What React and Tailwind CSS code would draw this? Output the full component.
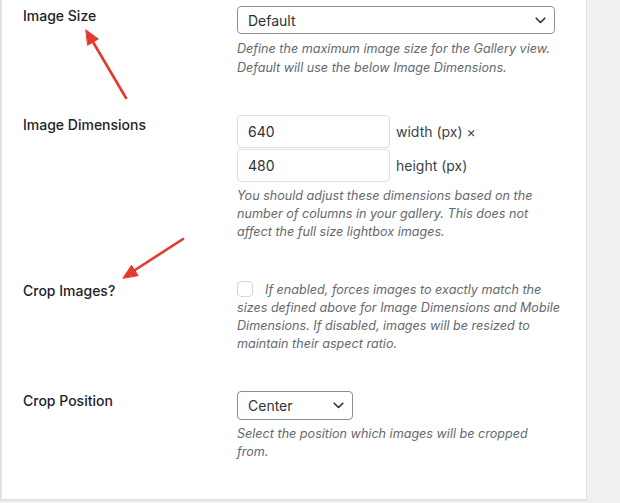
import React from 'react';

const Chevron = () => (
  <svg width="11" height="7" viewBox="0 0 11 7" fill="none" className="shrink-0">
    <path d="M1.2 1.2 L5.5 5.5 L9.8 1.2" stroke="#2c3338" strokeWidth="1.6" strokeLinecap="round" strokeLinejoin="round" />
  </svg>
);

const Select = ({ value, className }) => (
  <div className={`flex items-center justify-between border border-[#8c8f94] rounded-[4px] bg-white pl-[10px] pr-[8px] text-[14px] text-[#2c3338] ${className}`}>
    <span>{value}</span>
    <Chevron />
  </div>
);

const Row = ({ label, children, className = '' }) => (
  <div className={`flex ${className}`}>
    <div className="w-[235px] shrink-0 pl-[21px] text-[14px] leading-5 font-medium text-[#1d2327]">{label}</div>
    <div className="w-[330px]">{children}</div>
  </div>
);

// lines kept as in the reference wrapping
const Desc = ({ lines, className = '', lead = null }) => (
  <p className={`text-[12.6px] leading-[18px] italic text-[#646970] whitespace-nowrap ${className}`}>
    {lead}
    {lines.map((l, i) => (
      <React.Fragment key={i}>
        {i > 0 && <br />}
        {l}
      </React.Fragment>
    ))}
  </p>
);

export default function App() {
  return (
    <div className="relative w-[620px] h-[503px] overflow-hidden bg-[#f0f0f1]" style={{ fontFamily: 'Inter, "Noto Sans", sans-serif' }}>
      <div className="w-[587px] h-[501px] bg-white border-l-2 border-r border-b-2 border-[#e2e2e4] pt-[6px]">
        <Row label="Image Size">
          <Select value="Default" className="w-[318px] h-[28px]" />
          <Desc
            className="mt-[5px] leading-[19px]"
            lines={['Define the maximum image size for the Gallery view.', 'Default will use the below Image Dimensions.']}
          />
        </Row>

        <Row label="Image Dimensions" className="mt-[38px]">
          <div className="flex flex-col gap-px">
            <div className="flex items-center gap-[6px]">
              <div className="w-[153px] h-[33px] border border-[#e0e0e2] rounded-[4px] pl-[10px] flex items-center text-[14px] text-[#2c3338]">640</div>
              <span className="text-[14px] text-[#3c434a]">width (px) ×</span>
            </div>
            <div className="flex items-center gap-[6px]">
              <div className="w-[153px] h-[33px] border border-[#e0e0e2] rounded-[4px] pl-[10px] flex items-center text-[14px] text-[#2c3338]">480</div>
              <span className="text-[14px] text-[#3c434a]">height (px)</span>
            </div>
          </div>
          <Desc
            className="mt-[5px]"
            lines={[
              'You should adjust these dimensions based on the',
              'number of columns in your gallery. This does not',
              'affect the full size lightbox images.',
            ]}
          />
        </Row>

        <Row label="Crop Images?" className="mt-[40px]">
          <Desc
            lead={<span className="inline-block align-[-3px] w-[16px] h-[16px] border border-[#d6d6d8] rounded-[4px] mr-[12px]" />}
            lines={[
              'If enabled, forces images to exactly match the',
              'sizes defined above for Image Dimensions and Mobile',
              'Dimensions. If disabled, images will be resized to',
              'maintain their aspect ratio.',
            ]}
          />
        </Row>

        <Row label="Crop Position" className="mt-[38px]">
          <Select value="Center" className="w-[116px] h-[29px]" />
          <Desc className="mt-[5px]" lines={['Select the position which images will be cropped', 'from.']} />
        </Row>
      </div>

      {/* annotation arrows */}
      <svg className="absolute inset-0 pointer-events-none" width="620" height="503">
        <g stroke="#e5392b" strokeWidth="2.6" strokeLinecap="round" fill="#e5392b">
          <line x1="126" y1="98" x2="93" y2="42" />
          <polygon points="86,30 98.3,39 87.9,45.1" strokeWidth="1" strokeLinejoin="round" />
          <line x1="183" y1="239" x2="135" y2="270" />
          <polygon points="123,278 131.5,265.3 138,275.4" strokeWidth="1" strokeLinejoin="round" />
        </g>
      </svg>
    </div>
  );
}
